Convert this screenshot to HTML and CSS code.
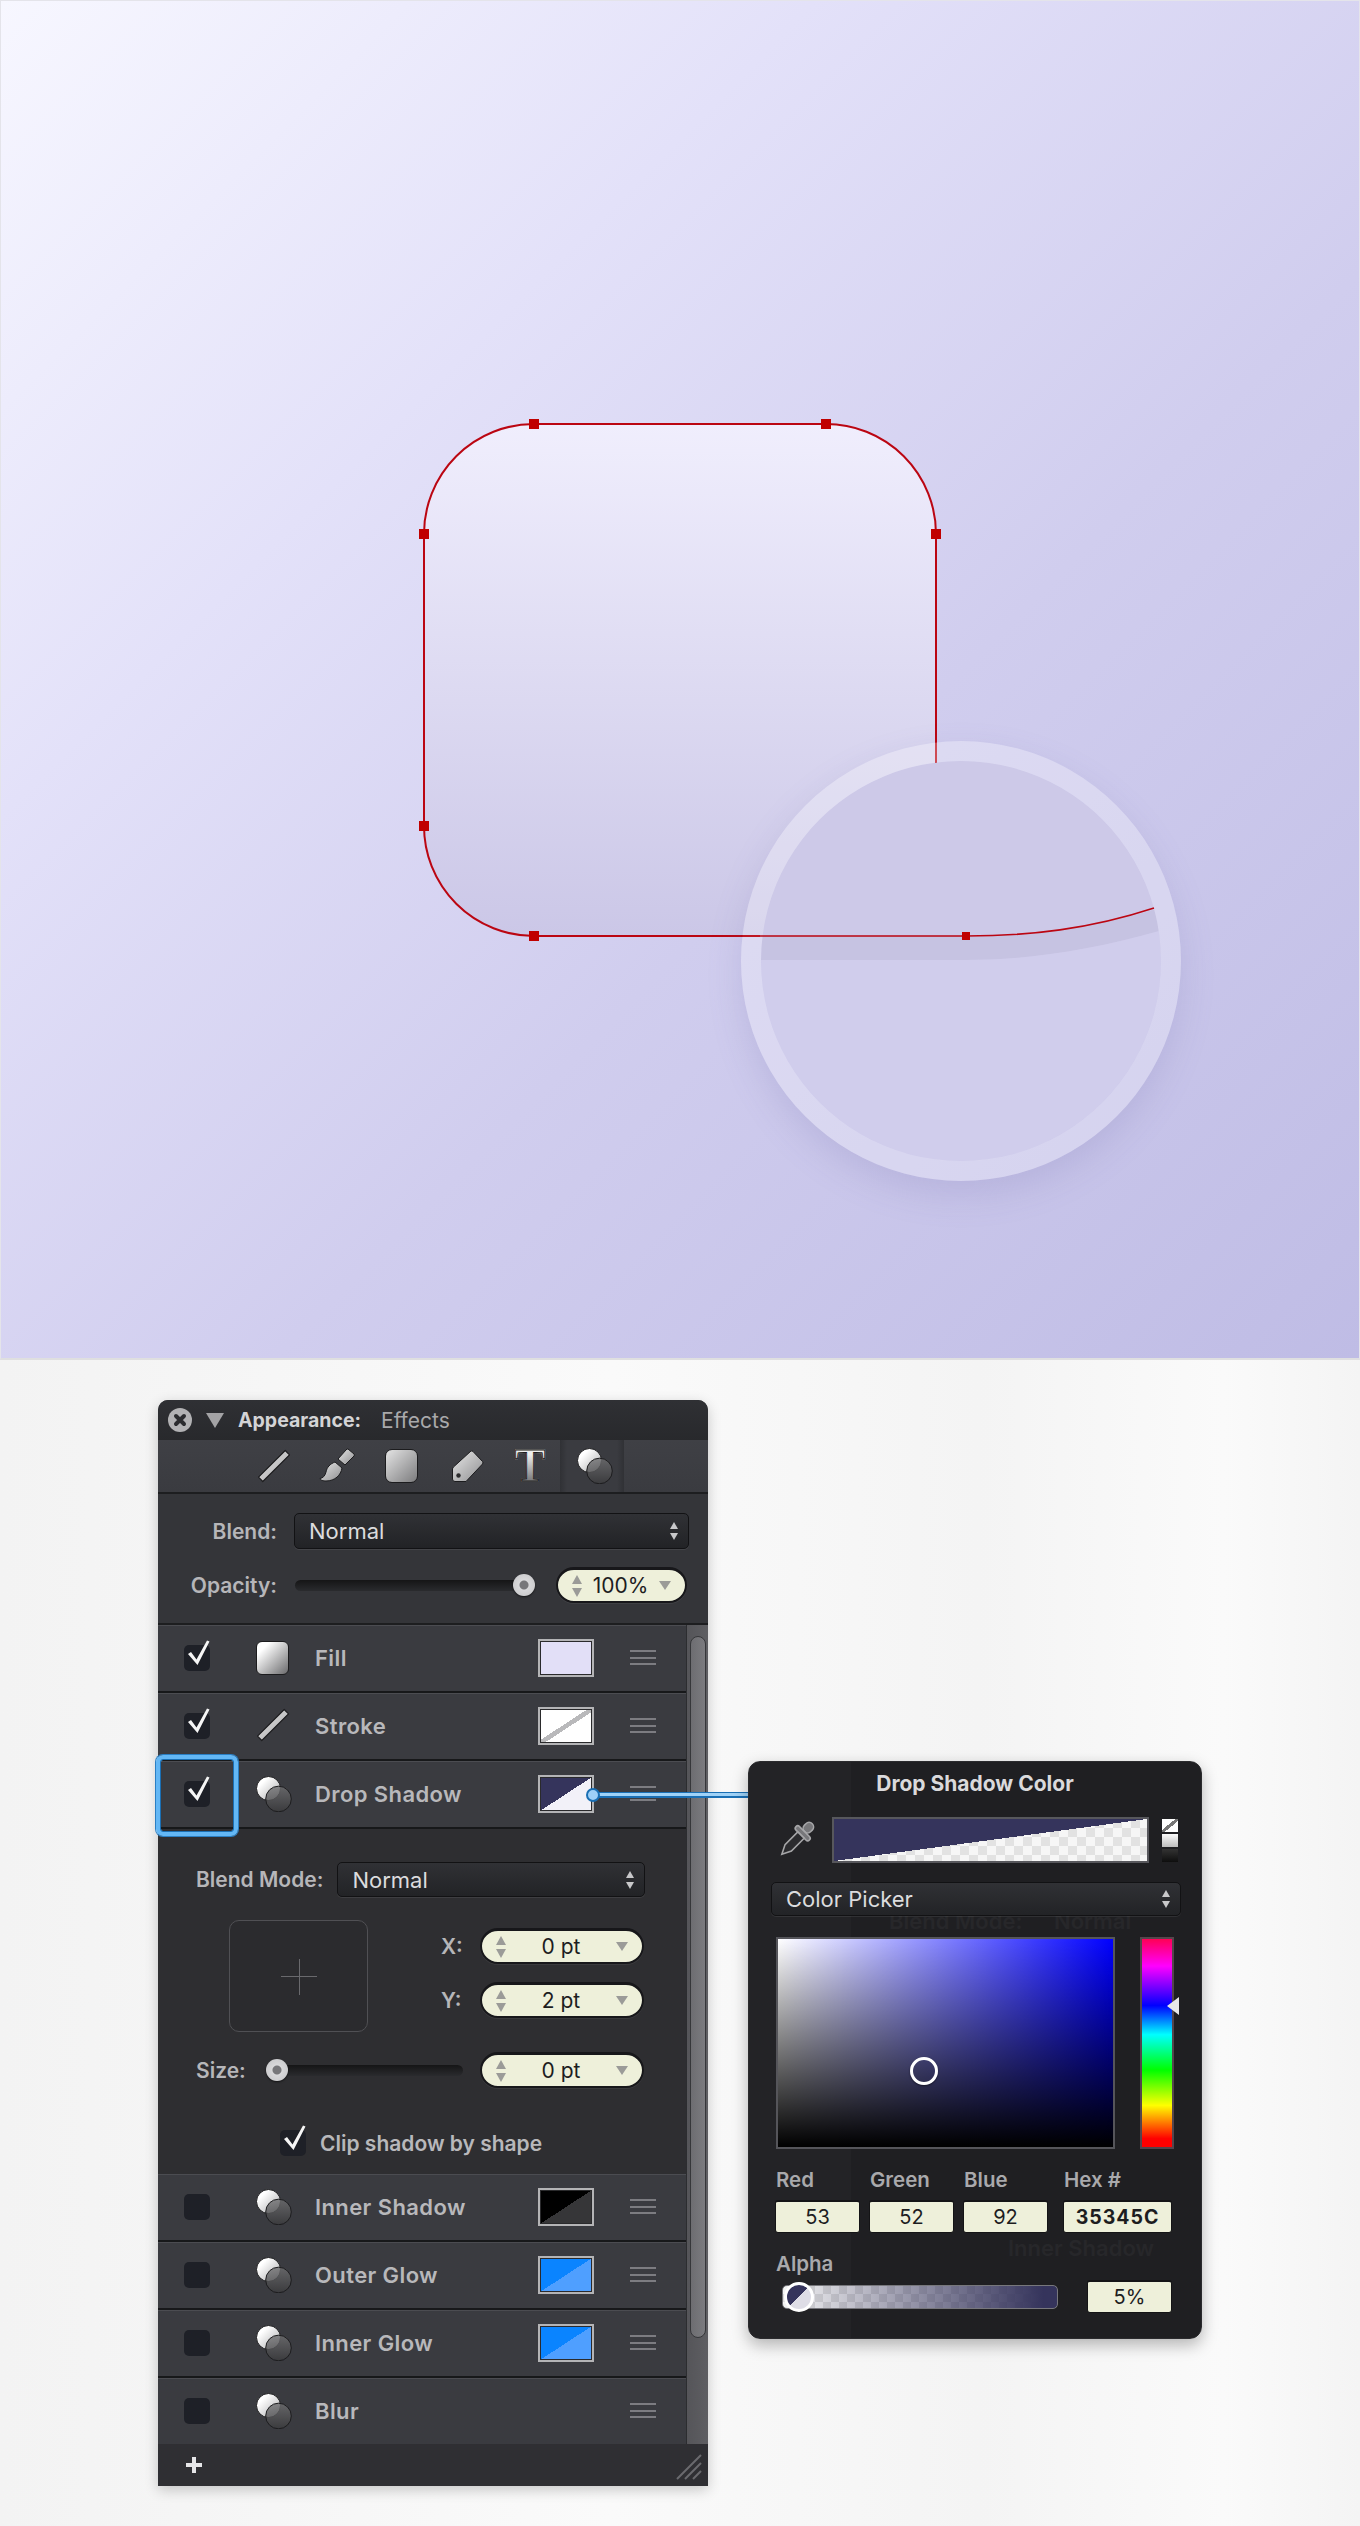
FILE: index.html
```html
<!DOCTYPE html>
<html lang="en">
<head>
<meta charset="utf-8">
<title>Appearance: Effects</title>
<link rel="stylesheet" href="styles.css">
</head>
<body>
<svg class="defs" width="0" height="0" aria-hidden="true">
  <defs>
    <linearGradient id="rectFill" x1="0" y1="0" x2="0" y2="1">
      <stop offset="0" stop-color="#f0eefd"/>
      <stop offset="1" stop-color="#cbc7e7"/>
    </linearGradient>
    <linearGradient id="iconGrey" x1="0" y1="0" x2="1" y2="1">
      <stop offset="0" stop-color="#e8e8e8"/>
      <stop offset="1" stop-color="#8e8e90"/>
    </linearGradient>
    <linearGradient id="iconBar" x1="0" y1="0" x2="1" y2="1">
      <stop offset="0" stop-color="#dcdcdc"/>
      <stop offset="1" stop-color="#b0b0b2"/>
    </linearGradient>
    <linearGradient id="fxDark" x1="0" y1="0" x2="0" y2="1">
      <stop offset="0" stop-color="#707072"/>
      <stop offset="1" stop-color="#3b3b3d"/>
    </linearGradient>
    <linearGradient id="fxLight" x1="0" y1="0" x2="1" y2="1">
      <stop offset="0.25" stop-color="#ffffff"/>
      <stop offset="1" stop-color="#a8a8aa"/>
    </linearGradient>
    <symbol id="fx" viewBox="0 0 36 36">
      <circle cx="12.5" cy="12.5" r="12" fill="url(#fxLight)" stroke="#1c1c1e" stroke-width="1"/>
      <circle cx="22.5" cy="23" r="12.8" fill="url(#fxDark)" fill-opacity=".8" stroke="#1c1c1e" stroke-width="1"/>
    </symbol>
    <symbol id="line" viewBox="0 0 34 34">
      <path d="M28.2 1.5 32.5 5.8 5.8 32.5 1.5 28.2Z" fill="url(#iconBar)" stroke="#1c1c1e" stroke-width="1.2" stroke-linejoin="round"/>
    </symbol>
  </defs>
</svg>

<section class="canvas">
  <svg class="art" viewBox="0 0 1360 1360" width="1360" height="1360" role="img" aria-label="Rounded rectangle with a magnified corner">
    <defs>
      <clipPath id="lensClip"><circle cx="961" cy="961" r="200"/></clipPath>
      <clipPath id="outsideLens"><path clip-rule="evenodd" d="M0 0H1360V1360H0ZM961 741A220 220 0 1 1 960.99 741Z"/></clipPath>
      <filter id="soft" x="-20%" y="-20%" width="140%" height="140%"><feGaussianBlur stdDeviation="18"/></filter>
    </defs>
    <path class="shape-fill" d="M534 424H826A110 110 0 0 1 936 534V826A110 110 0 0 1 826 936H534A110 110 0 0 1 424 826V534A110 110 0 0 1 534 424Z"/>
    <path class="shape-line" d="M936 763V534A110 110 0 0 0 826 424H534A110 110 0 0 0 424 534V826A110 110 0 0 0 534 936H760"/>
    <g clip-path="url(#outsideLens)">
      <circle class="lens-shadow" cx="961" cy="975" r="218" filter="url(#soft)"/>
    </g>
    <g clip-path="url(#lensClip)">
      <rect class="lens-upper" x="741" y="741" width="440" height="220"/>
      <path class="lens-band" d="M741 936H966C1030 936 1095 928 1170 905V928C1095 950 1030 960 966 960H741Z"/>
      <path class="lens-lower" d="M741 960H966C1030 960 1095 950 1170 928V1181H741Z"/>
    </g>
    <path class="ring" fill-rule="evenodd" d="M961 741A220 220 0 1 1 960.99 741ZM961 761A200 200 0 1 0 961.01 761Z"/>
    <path class="shape-line lens-line" d="M741 936H966C1030 936 1090 929 1154 908"/>
    <g class="nodes">
      <rect x="529" y="419" width="10" height="10"/><rect x="821" y="419" width="10" height="10"/>
      <rect x="419" y="529" width="10" height="10"/><rect x="931" y="529" width="10" height="10"/>
      <rect x="419" y="821" width="10" height="10"/><rect x="529" y="931" width="10" height="10"/>
      <rect x="962" y="932" width="8" height="8"/>
    </g>
  </svg>
</section>

<section class="stage">
  <div class="panel">
    <header class="panel-head">
      <span class="close"><svg viewBox="0 0 24 24" width="24" height="24"><path d="M8 8 16 16M16 8 8 16"/></svg></span>
      <i class="disclosure"></i>
      <strong class="head-title">Appearance:</strong>
      <span class="head-sub">Effects</span>
    </header>

    <nav class="toolbar">
      <svg class="tool tool-line" viewBox="0 0 34 34" width="34" height="34"><use href="#line"/></svg>
      <svg class="tool tool-brush" viewBox="0 0 36 36" width="36" height="36">
        <path d="M29 1 35 6Q36 7 35 8L26 17 19 11 27 2Q28 .5 29 1Z" fill="url(#iconGrey)" stroke="#1c1c1e"/>
        <path d="M16 14 23 20C22 27 16 33 7 33 4 33 1 32 1 30.5 4 30 6 28 7 24 8 19 11 16 16 14Z" fill="url(#iconGrey)" stroke="#1c1c1e"/>
      </svg>
      <span class="tool tool-square"></span>
      <svg class="tool tool-tag" viewBox="0 0 34 34" width="34" height="34">
        <path d="M20 2 Q21 1.5 22 2.5L31.5 12.5Q32.5 14 31.5 15L15 32.5H4Q1.5 32.5 1.5 30V20Q1.5 19 2.5 18Z" fill="url(#iconGrey)" stroke="#1c1c1e" stroke-linejoin="round"/>
        <circle cx="7.5" cy="26.5" r="2.2" fill="#2a2a2c"/>
      </svg>
      <span class="tool tool-t">T</span>
      <span class="tool-active"><svg viewBox="0 0 36 36" width="36" height="36"><use href="#fx"/></svg></span>
    </nav>

    <div class="props">
      <div class="prop-line">
        <label class="prop-label">Blend:</label>
        <div class="select select-wide"><span>Normal</span><span class="updown"><i class="up"></i><i class="down"></i></span></div>
      </div>
      <div class="prop-line prop-opacity">
        <label class="prop-label">Opacity:</label>
        <div class="slider slider-op"><i class="knob knob-end"></i></div>
        <div class="stepper stepper-op"><span class="spin"><i class="up"></i><i class="down"></i></span><span class="val">100%</span><i class="caret"></i></div>
      </div>
    </div>

    <div class="body">
      <div class="list">
        <div class="row">
          <span class="check on"><svg viewBox="0 0 26 32" width="26" height="32"><polygon points="4,17 7,15 12.5,22.5 23,3.5 25.5,4.5 13.5,28"/></svg></span>
          <span class="row-icon square-white"></span>
          <span class="row-label">Fill</span>
          <span class="swatch sw-fill"></span>
          <span class="grip"></span>
        </div>
        <div class="row">
          <span class="check on"><svg viewBox="0 0 26 32" width="26" height="32"><polygon points="4,17 7,15 12.5,22.5 23,3.5 25.5,4.5 13.5,28"/></svg></span>
          <svg class="row-icon" viewBox="0 0 36 36" width="36" height="36"><use href="#line" width="34" height="34"/></svg>
          <span class="row-label">Stroke</span>
          <span class="swatch sw-stroke"></span>
          <span class="grip"></span>
        </div>
        <div class="row">
          <span class="check on"><svg viewBox="0 0 26 32" width="26" height="32"><polygon points="4,17 7,15 12.5,22.5 23,3.5 25.5,4.5 13.5,28"/></svg></span>
          <svg class="row-icon" viewBox="0 0 36 36" width="36" height="36"><use href="#fx"/></svg>
          <span class="row-label">Drop Shadow</span>
          <span class="swatch sw-drop"></span>
          <span class="grip"></span>
        </div>

        <div class="details">
          <div class="d-blend">
            <label class="prop-label">Blend Mode:</label>
            <div class="select select-mode"><span>Normal</span><span class="updown"><i class="up"></i><i class="down"></i></span></div>
          </div>
          <div class="d-offset">
            <div class="offset-box"><i class="cross-h"></i><i class="cross-v"></i></div>
            <div class="offset-fields">
              <div class="field"><label class="prop-label">X:</label><div class="stepper"><span class="spin"><i class="up"></i><i class="down"></i></span><span class="val">0 pt</span><i class="caret"></i></div></div>
              <div class="field"><label class="prop-label">Y:</label><div class="stepper"><span class="spin"><i class="up"></i><i class="down"></i></span><span class="val">2 pt</span><i class="caret"></i></div></div>
            </div>
          </div>
          <div class="d-size">
            <label class="prop-label">Size:</label>
            <div class="slider slider-size"><i class="knob knob-start"></i></div>
            <div class="stepper"><span class="spin"><i class="up"></i><i class="down"></i></span><span class="val">0 pt</span><i class="caret"></i></div>
          </div>
          <div class="d-clip">
            <span class="check on"><svg viewBox="0 0 26 32" width="26" height="32"><polygon points="4,17 7,15 12.5,22.5 23,3.5 25.5,4.5 13.5,28"/></svg></span>
            <span class="clip-label">Clip shadow by shape</span>
          </div>
        </div>

        <div class="row">
          <span class="check"></span>
          <svg class="row-icon" viewBox="0 0 36 36" width="36" height="36"><use href="#fx"/></svg>
          <span class="row-label">Inner Shadow</span>
          <span class="swatch sw-inner"></span>
          <span class="grip"></span>
        </div>
        <div class="row">
          <span class="check"></span>
          <svg class="row-icon" viewBox="0 0 36 36" width="36" height="36"><use href="#fx"/></svg>
          <span class="row-label">Outer Glow</span>
          <span class="swatch sw-glow"></span>
          <span class="grip"></span>
        </div>
        <div class="row">
          <span class="check"></span>
          <svg class="row-icon" viewBox="0 0 36 36" width="36" height="36"><use href="#fx"/></svg>
          <span class="row-label">Inner Glow</span>
          <span class="swatch sw-glow"></span>
          <span class="grip"></span>
        </div>
        <div class="row row-last">
          <span class="check"></span>
          <svg class="row-icon" viewBox="0 0 36 36" width="36" height="36"><use href="#fx"/></svg>
          <span class="row-label">Blur</span>
          <span class="swatch sw-none"></span>
          <span class="grip"></span>
        </div>
      </div>
      <div class="scrollbar"><div class="thumb"></div></div>
    </div>

    <footer class="panel-foot">
      <span class="plus"></span>
      <svg class="resize" viewBox="0 0 26 26" width="26" height="26"><path d="M1 25 25 1M9 25 25 9M17 25 25 17"/></svg>
    </footer>
  </div>

  <div class="focus-ring"></div>
  <div class="connector"><i class="conn-dot"></i></div>

  <aside class="popover">
    <span class="ghost ghost-mode">Blend Mode:</span>
    <span class="ghost ghost-normal">Normal</span>
    <span class="ghost ghost-inner">Inner Shadow</span>
    <h2 class="pop-title">Drop Shadow Color</h2>
    <div class="pop-well-line">
      <svg class="dropper" viewBox="0 0 38 40" width="38" height="40">
        <g transform="rotate(45 19 20)" stroke="#a6a6a8" stroke-width="1.6" fill="#2b2b2e">
          <rect x="14.5" y="-3" width="9" height="11" rx="4.5" fill="#77777a"/>
          <rect x="9.5" y="8" width="19" height="5" rx="2.5" fill="#77777a"/>
          <path d="M14.5 13H23.5V31L19 40 14.5 31Z"/>
        </g>
      </svg>
      <div class="well"></div>
      <div class="mini">
        <i class="mini-a"></i><i class="mini-b"></i><i class="mini-c"></i>
      </div>
    </div>
    <div class="select select-pop"><span>Color Picker</span><span class="updown"><i class="up"></i><i class="down"></i></span></div>
    <div class="pickers">
      <div class="sv"><i class="sv-ring"></i></div>
      <div class="hue"><i class="hue-arrow"></i></div>
    </div>
    <div class="rgb">
      <div class="rgb-col c-r"><span class="cap">Red</span><span class="inp">53</span></div>
      <div class="rgb-col c-g"><span class="cap">Green</span><span class="inp">52</span></div>
      <div class="rgb-col c-b"><span class="cap">Blue</span><span class="inp">92</span></div>
      <div class="rgb-col c-h"><span class="cap">Hex #</span><span class="inp inp-hex">35345C</span></div>
    </div>
    <span class="cap cap-alpha">Alpha</span>
    <div class="alpha-line">
      <div class="alpha"><i class="alpha-knob"></i></div>
      <span class="inp inp-alpha">5%</span>
    </div>
  </aside>
</section>
</body>
</html>
```

FILE: styles.css
```css
* { box-sizing: border-box; }
html, body { margin: 0; padding: 0; }
body {
  width: 1360px;
  height: 2526px;
  overflow: hidden;
  background: #f6f6f6;
  font-family: Inter, "Liberation Sans", sans-serif;
}
i { display: block; font-style: normal; }
.defs { position: absolute; }

/* canvas */
.canvas {
  height: 1360px;
  overflow: hidden;
  background: linear-gradient(135deg, #f7f7ff 0%, #e3e1f9 30%, #d0cdee 60%, #bfbce5 100%);
  border: 1px solid #e4e4ea;
  border-bottom: 2px solid #dfdfe0;
}
.art { display: block; margin: -1px; }
.shape-fill { fill: url(#rectFill); }
.shape-line { fill: none; stroke: #bb0612; stroke-width: 2; }
.nodes rect { fill: #c00000; }
.lens-shadow { fill: #6f6aa8; opacity: .2; }
.lens-upper { fill: #cdc9e8; }
.lens-band { fill: #c6c3e2; }
.lens-lower { fill: #d0cdec; }
.ring { fill: #fff; fill-opacity: .28; }
.lens-line { stroke-width: 1.6; }

/* stage */
.stage {
  position: relative;
  height: 1166px;
  padding: 40px 0 0 158px;
  background: linear-gradient(90deg, #f3f3f3 0%, #f6f6f6 20%, #fafafa 45%, #f4f4f4 72%, #fafafa 90%, #f4f4f4 100%);
}

/* panel */
.panel {
  width: 550px;
  height: 1086px;
  display: flex;
  flex-direction: column;
  background: #3a3b40;
  border-radius: 10px 10px 0 0;
  box-shadow: 0 4px 14px rgba(0, 0, 0, .2);
  overflow: hidden;
}
.panel-head {
  height: 40px;
  flex: none;
  display: flex;
  align-items: center;
  padding-left: 10px;
  background: linear-gradient(#2f3034, #28292c);
}
.close {
  width: 24px;
  height: 24px;
  border-radius: 50%;
  background: #b2b2b4;
}
.close svg { display: block; }
.close path { stroke: #2b2c2f; stroke-width: 4; fill: none; stroke-linecap: round; }
.disclosure {
  width: 0;
  height: 0;
  margin-left: 14px;
  border-left: 9px solid transparent;
  border-right: 9px solid transparent;
  border-top: 15px solid #a3a3a5;
}
.head-title { margin-left: 14px; font-size: 19.5px; font-weight: 700; color: #d4d4d6; }
.head-sub { margin-left: 20px; font-size: 21px; font-weight: 400; color: #a9a9ab; }

.toolbar {
  height: 54px;
  flex: none;
  display: flex;
  align-items: center;
  padding-left: 99px;
  background: linear-gradient(#3f4045, #3a3b40);
  border-bottom: 2px solid #1d1e20;
}
.tool { display: block; flex: none; }
.tool-brush { margin-left: 28px; }
.tool-square {
  width: 33px;
  height: 34px;
  margin-left: 30px;
  border-radius: 7px;
  border: 1.5px solid #1c1c1e;
  background: linear-gradient(135deg, #e4e4e4, #7c7c7e);
}
.tool-tag { margin-left: 33px; }
.tool-t {
  width: 34px;
  height: 38px;
  margin-left: 28px;
  font-family: "Liberation Serif", serif;
  font-weight: 700;
  font-size: 46px;
  line-height: 38px;
  text-align: center;
  background: linear-gradient(#eeeeee 20%, #808083 85%);
  -webkit-background-clip: text;
  background-clip: text;
  -webkit-text-fill-color: transparent;
  -webkit-text-stroke: 1px #1e1e20;
}
.tool-active {
  height: 52px;
  width: 64px;
  margin-left: 13px;
  padding-left: 6px;
  display: flex;
  align-items: center;
  justify-content: center;
  background: linear-gradient(90deg, #303135 0, #3a3b40 7px, #3a3b40 calc(100% - 7px), #303135 100%);
}
.tool-active svg { display: block; }

.props {
  height: 131px;
  flex: none;
  padding-top: 19px;
  background: #343539;
  border-bottom: 2px solid #1d1e20;
}
.prop-line { display: flex; align-items: center; }
.prop-line .prop-label { width: 119px; text-align: right; }
.prop-label { font-size: 21px; font-weight: 600; color: #b6b6b9; white-space: nowrap; }
.prop-opacity { margin-top: 18px; }

.select {
  display: flex;
  align-items: center;
  justify-content: space-between;
  border: 1px solid #121214;
  border-radius: 5px;
  background: linear-gradient(#303135, #222326);
  box-shadow: 0 1px 0 rgba(255, 255, 255, .08);
  color: #dcdcde;
  font-size: 22px;
  padding: 0 10px 0 14px;
}
.select-wide { width: 395px; height: 36px; margin-left: 17px; }
.select-mode { width: 308px; height: 35px; margin-left: 14px; }
.select-pop { width: 410px; height: 34px; margin-left: 22px; margin-top: 19px; }
.updown { display: flex; flex-direction: column; gap: 4px; }
.updown .up, .spin .up {
  width: 0; height: 0;
  border-left: 4px solid transparent;
  border-right: 4px solid transparent;
  border-bottom: 7px solid #c8c8ca;
}
.updown .down, .spin .down {
  width: 0; height: 0;
  border-left: 4px solid transparent;
  border-right: 4px solid transparent;
  border-top: 7px solid #c8c8ca;
}

.slider {
  position: relative;
  height: 11px;
  border-radius: 6px;
  background: linear-gradient(#151516, #2a2b2e);
}
.slider-op { width: 240px; margin-left: 18px; }
.slider-size { width: 197px; }
.knob {
  position: absolute;
  top: -6px;
  width: 22px;
  height: 22px;
  border-radius: 50%;
  background: radial-gradient(circle, #77777a 0 4px, #d8d8da 5px, #c4c4c6 100%);
  box-shadow: 0 1px 2px rgba(0, 0, 0, .6);
}
.knob-end { right: 0; }
.knob-start { left: 0; }

.stepper {
  flex: none;
  width: 164px;
  height: 36px;
  display: flex;
  align-items: center;
  padding: 0 14px;
  border-radius: 18px;
  background: #eef0da;
  border: 2px solid #17171a;
  border-top-width: 3px;
  box-shadow: 0 1px 0 rgba(255, 255, 255, .06);
  color: #1d1d1f;
  font-size: 21px;
}
.stepper-op { width: 131px; margin-left: 21px; }
.spin { display: flex; flex-direction: column; gap: 4px; flex: none; }
.spin .up { border-left-width: 5px; border-right-width: 5px; border-bottom: 9px solid #9b9b98; }
.spin .down { border-left-width: 5px; border-right-width: 5px; border-top: 9px solid #9b9b98; }
.val { flex: 1; text-align: center; }
.caret {
  flex: none;
  width: 0; height: 0;
  border-left: 6px solid transparent;
  border-right: 6px solid transparent;
  border-top: 9px solid #9b9b98;
}

.body { flex: 1; min-height: 0; display: flex; }
.list { width: 528px; flex: none; }
.scrollbar {
  width: 22px;
  flex: none;
  padding: 11px 2px 0 3px;
  background: linear-gradient(90deg, #555559, #5e5e62);
  border-left: 1px solid #2c2d30;
}
.thumb {
  height: 702px;
  border-radius: 9px;
  background: linear-gradient(90deg, #6d6d71, #7b7b7f);
  border: 1px solid #36373a;
}

.row {
  height: 68px;
  display: flex;
  align-items: center;
  padding: 0 30px 2px 26px;
  background: #3a3b40;
  border-top: 1px solid #4b4c51;
  border-bottom: 2px solid #17181a;
}
.row-last { height: 66px; border-bottom: 0; }
.check {
  position: relative;
  flex: none;
  display: block;
  width: 26px;
  height: 26px;
  border-radius: 5px;
  background: #1e2027;
}
.check svg { position: absolute; left: 0; top: -8px; display: block; overflow: visible; }
.check polygon { fill: #f6f6f6; }
.row-icon { display: block; flex: none; margin-left: 46px; }
.square-white {
  width: 33px;
  height: 34px;
  margin-right: 3px;
  border-radius: 6px;
  border: 1.5px solid #1c1c1e;
  background: linear-gradient(135deg, #fff 20%, #6a6a6c);
}
.row-label {
  flex: 1;
  margin-left: 23px;
  font-size: 22px;
  letter-spacing: .4px;
  font-weight: 600;
  color: #b8b8bb;
  white-space: nowrap;
}
.swatch {
  flex: none;
  width: 56px;
  height: 38px;
  border: 2px solid #b4b4b6;
  outline: 1px solid #2a2a2c;
  outline-offset: -3px;
}
.sw-fill { background: #e2dff7; }
.sw-stroke { background: linear-gradient(to bottom right, #fff 46%, #b9b9bb 46%, #b9b9bb 54%, #fff 54%); }
.sw-drop { background: linear-gradient(to bottom right, #35345c 50%, #f2f1f8 50%); }
.sw-inner { background: linear-gradient(to bottom right, #000 50%, #363638 50%); }
.sw-glow { background: linear-gradient(to bottom right, #0a84ff 50%, #4f9fff 50%); }
.sw-none { visibility: hidden; }
.grip {
  flex: none;
  width: 26px;
  height: 15px;
  margin-left: 36px;
  border-top: 2px solid #7c7c81;
  border-bottom: 2px solid #7c7c81;
  background: linear-gradient(#7c7c81, #7c7c81) center / 100% 2px no-repeat;
}

.details {
  height: 345px;
  background: #2e2e31;
  padding-top: 33px;
}
.d-blend { display: flex; align-items: center; padding-left: 38px; }
.d-offset { display: flex; margin-top: 23px; padding-left: 71px; }
.offset-box {
  position: relative;
  width: 139px;
  height: 112px;
  border: 1px solid #505054;
  border-radius: 10px;
  background: #2b2b2e;
}
.cross-h { position: absolute; left: 51px; top: 55px; width: 36px; height: 1px; background: #69696d; }
.cross-v { position: absolute; left: 69px; top: 38px; width: 1px; height: 36px; background: #69696d; }
.offset-fields { display: flex; flex-direction: column; gap: 18px; margin: 8px 0 0 73px; }
.field { display: flex; align-items: center; }
.field .prop-label { width: 39px; }
.d-size { display: flex; align-items: center; margin-top: 20px; padding-left: 38px; }
.d-size .prop-label { width: 70px; }
.d-size .stepper { margin-left: 17px; }
.d-clip { display: flex; align-items: center; margin-top: 42px; padding-left: 122px; }
.clip-label { margin-left: 14px; font-size: 21px; font-weight: 600; color: #b8b8bb; white-space: nowrap; }

.panel-foot {
  height: 42px;
  flex: none;
  display: flex;
  align-items: center;
  justify-content: space-between;
  padding: 0 6px 0 28px;
  background: #2f2f33;
}
.plus {
  width: 16px;
  height: 16px;
  background:
    linear-gradient(#e6e6e8, #e6e6e8) center / 100% 4px no-repeat,
    linear-gradient(#e6e6e8, #e6e6e8) center / 4px 100% no-repeat;
}
.resize { display: block; align-self: flex-end; margin-bottom: 6px; }
.resize path { stroke: #6a6a6e; stroke-width: 2; fill: none; }

/* overlays */
.focus-ring {
  position: absolute;
  left: 156px;
  top: 395px;
  width: 82px;
  height: 81px;
  border: 5px solid #63b7f5;
  border-radius: 7px;
  outline: 1px solid #1a6fb4;
  outline-offset: -5px;
  box-shadow: 0 0 0 1px #2a7fc4;
}
.connector {
  position: absolute;
  left: 592px;
  top: 432px;
  width: 158px;
  height: 6px;
  background: linear-gradient(#1a6fb4 0 1px, #9fd2f7 1px 4px, #1a6fb4 4px);
}
.conn-dot {
  position: absolute;
  left: -6px;
  top: -4px;
  width: 14px;
  height: 14px;
  border-radius: 50%;
  background: #9fd0f7;
  border: 2px solid #1a6fb4;
}

/* popover */
.popover {
  position: absolute;
  z-index: 1;
  left: 748px;
  top: 401px;
  width: 454px;
  height: 578px;
  display: flex;
  flex-direction: column;
  overflow: hidden;
  border-radius: 12px;
  background: linear-gradient(90deg, #232326 0, #232326 102px, #1f1f22 102px);
  box-shadow: 0 6px 16px rgba(0, 0, 0, .28);
  border: 1px solid #2b2b2e;
  color: #dcdcde;
}
.ghost {
  position: absolute;
  z-index: -1;
  font-size: 22px;
  font-weight: 600;
  color: #27272a;
  white-space: nowrap;
}
.ghost-mode { left: 140px; top: 146px; }
.ghost-normal { left: 305px; top: 146px; }
.ghost-inner { left: 259px; top: 473px; }
.pop-title { margin: 9px 0 0; font-size: 21px; font-weight: 700; line-height: 26px; text-align: center; color: #dadadc; }
.pop-well-line { display: flex; align-items: center; margin-top: 20px; padding-left: 28px; height: 46px; }
.dropper { display: block; flex: none; }
.well {
  width: 317px;
  height: 46px;
  margin-left: 17px;
  border: 2px solid #57575c;
  background:
    linear-gradient(to bottom right, #35345c 50%, transparent 50%),
    repeating-conic-gradient(#e2e2e2 0 25%, #f6f6f6 0 50%) 0 0 / 18px 18px;
}
.mini { margin-left: 13px; display: flex; flex-direction: column; gap: 2px; }
.mini i { width: 16px; height: 13px; }
.mini-a { background: linear-gradient(to bottom right, #fff 42%, #777 42%, #777 58%, #fff 58%); }
.mini-b { background: linear-gradient(#fafafa, #bdbdbd); }
.mini-c { background: linear-gradient(#333, #0e0e0e); }
.pickers { display: flex; margin: 21px 0 0 27px; }
.sv {
  position: relative;
  width: 339px;
  height: 212px;
  border: 2px solid #55555a;
  background:
    linear-gradient(to top, #000, rgba(0, 0, 0, 0)),
    linear-gradient(to right, #fff, #00f);
}
.sv-ring {
  position: absolute;
  left: 132px;
  top: 118px;
  width: 28px;
  height: 28px;
  border: 3px solid #fff;
  border-radius: 50%;
  box-shadow: 0 1px 2px rgba(0, 0, 0, .5);
}
.hue {
  position: relative;
  width: 34px;
  height: 212px;
  margin-left: 25px;
  border: 2px solid #55454c;
  background: linear-gradient(#ff0055 0%, #ff00ff 13%, #0000ff 32%, #00ffff 46%, #00ff00 63%, #ffff00 80%, #ff0000 96%, #ff0000 100%);
}
.hue-arrow {
  position: absolute;
  right: -7px;
  top: 58px;
  width: 0; height: 0;
  border-top: 9px solid transparent;
  border-bottom: 9px solid transparent;
  border-right: 12px solid #e8e8e8;
}
.rgb { display: flex; margin: 20px 0 0 26px; }
.rgb-col { display: flex; flex-direction: column; }
.c-r, .c-g { width: 94px; }
.c-b { width: 100px; }
.cap { font-size: 20.5px; font-weight: 600; color: #a9a9ac; line-height: 22px; padding-left: 1px; }
.inp {
  display: block;
  width: 85px;
  height: 33px;
  margin-top: 9px;
  padding: 0;
  background: #eef0da;
  border: 1px solid #141416;
  border-top: 2px solid #141416;
  border-radius: 3px;
  color: #1d1d1f;
  font-size: 20px;
  line-height: 30px;
  text-align: center;
}
.inp-hex { width: 109px; font-weight: 700; letter-spacing: 1px; font-size: 19.5px; }
.cap-alpha { margin: 20px 0 0 26px; }
.alpha-line { display: flex; align-items: center; margin: 5px 0 0 33px; }
.alpha-line .inp { margin-top: 0; }
.alpha {
  position: relative;
  width: 276px;
  height: 24px;
  border: 1px solid #77777c;
  border-radius: 5px;
  background:
    linear-gradient(to right, rgba(53, 52, 92, 0), #35345c 95%),
    repeating-conic-gradient(#dcdcdc 0 25%, #f4f4f4 0 50%) 0 0 / 16px 16px;
}
.alpha-knob {
  position: absolute;
  left: 1px;
  top: -4px;
  width: 30px;
  height: 30px;
  border: 3px solid #fff;
  border-radius: 50%;
  background: linear-gradient(to bottom right, #35345c 50%, #dedde6 50%);
}
.inp-alpha { margin-left: 29px; }
```
